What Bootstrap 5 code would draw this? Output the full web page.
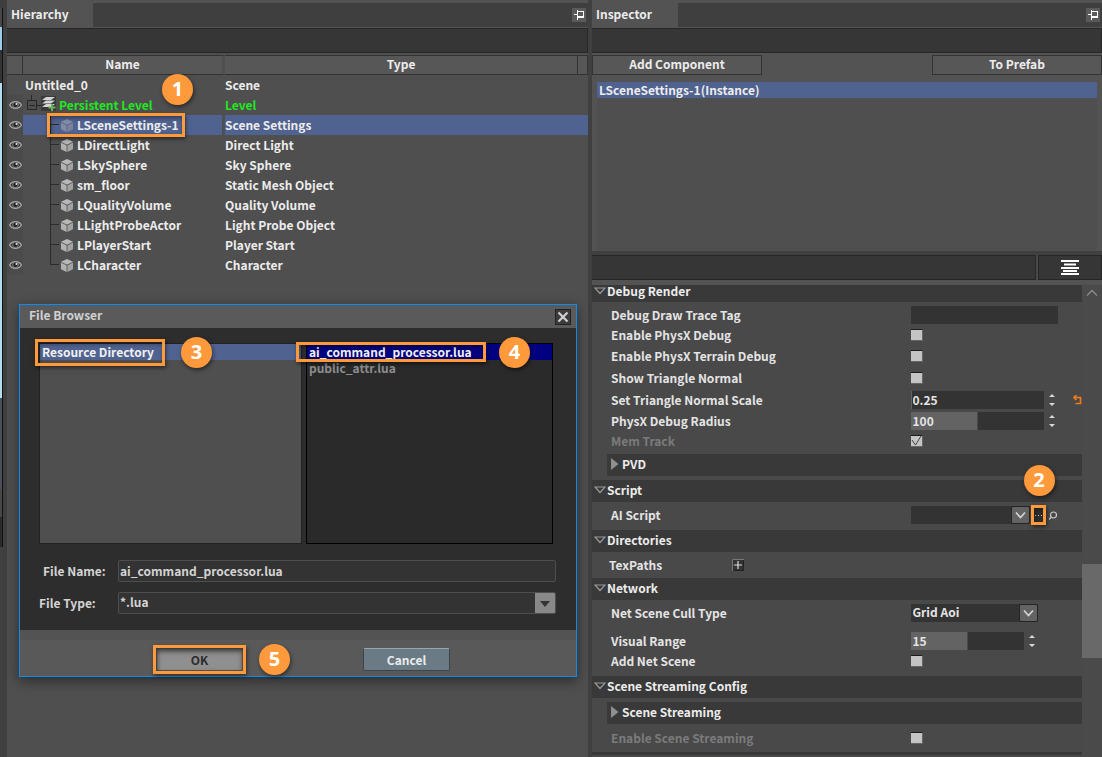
<!DOCTYPE html>
<html lang="en">
<head>
<meta charset="utf-8">
<meta name="viewport" content="width=device-width, initial-scale=1">
<title>Scene Editor</title>
<link href="https://cdn.jsdelivr.net/npm/bootstrap@5.3.0/dist/css/bootstrap.min.css" rel="stylesheet">
<style>
:root { --ed-bg:#4f4f4f; --ed-light:#535353; --ed-bar:#3f3f3f; --ed-dark:#363636; --ed-head:#393939; --ed-line:#262626; --ed-sel:#50628f; --ed-mark:#ff9a3c; }
body { background:#404040; color:#ececec; font-family:"Noto Sans CJK SC","Noto Sans",sans-serif; font-size:12px; line-height:20px; font-weight:600; }
button, input, select { font:inherit; color:inherit; border-radius:0; }
svg { display:block; flex:none; }

/* panels */
.edge-strip { width:7px; border-top:8px solid var(--ed-bar); }
.edge-strip div { width:3px; border-right:1px solid #111; }
.pane-tree { flex:581 1 0; min-width:0; background:var(--ed-bg); }
.pane-props { flex:510 1 0; min-width:0; background:#494949; margin-left:4px; }
.pane-tabs { height:25px; background:var(--ed-bar); border-bottom:1px solid var(--ed-light); }
.pane-top { border-top:3px solid var(--ed-light); }
.pane-tab { width:86px; padding-left:4px; background:var(--ed-light); line-height:22px; }
.pin-btn { width:14px; height:14px; margin:5px 2px 0 0; padding:0; border:0; background:#5a5a5a; }
.tool-strip { height:25px; background:var(--ed-dark); border:1px solid var(--ed-line); border-left:0; }

/* hierarchy */
.tree-table { table-layout:fixed; border-collapse:separate; border-spacing:0; width:100%; margin-top:2px; }
.tree-table th { height:20px; padding:0 0 2px; line-height:16px; font-weight:inherit; text-align:center; background:#575757; border:1px solid #333; border-left:0; }
.tree-table td { height:20px; padding:0; white-space:nowrap; }
.tree-table td.eye-cell { background:#4b4b4b; }
.tree-table tr.picked td + td { background:var(--ed-sel); }
.tree-table td:nth-child(2), .tree-table th:nth-child(2) { border-right:3px solid var(--ed-bg); }
.tree-root { padding-left:2px; }
.tree-item { position:relative; display:flex; align-items:center; height:20px; padding-left:38px; gap:4px; }
.tree-item.level { padding-left:4px; gap:3px; }
.tree-item.child::before { content:""; position:absolute; left:27px; top:0; width:9px; height:10px; border:solid #2b2b2b; border-width:0 0 1px 1px; }
.tree-item.child::after { content:""; position:absolute; left:27px; top:10px; height:10px; border-left:1px solid #2b2b2b; }
.tree-item.last-child::after { display:none; }
.live { color:#22e622; }

/* file dialog */
.file-dialog { position:absolute; left:12px; right:11px; top:301px; border:1px solid #0a8df2; box-shadow:0 4px 12px rgba(0,0,0,.45); background:#2d2d2d; }
.dlg-title { height:23px; padding:0 5px 0 9px; background:#5a5a5a; color:#d0d0d0; }
.dlg-close { width:16px; height:16px; margin-top:4px; padding:0; background:#3c3c3c; border:1px solid #222; }
.dlg-body { padding:15px 20px 16px 19px; color:#d4d4d4; }
.pick-row { gap:4px; margin-right:3px; }
.pick-list { height:201px; line-height:16px; border:1px solid #222; }
.pick-list a { display:block; height:16px; padding-left:2px; color:#f0f0f0; text-decoration:none; }
.list-dirs { flex:263 1 0; background:var(--ed-bg); }
.list-files { flex:247 1 0; background:#2a2a2a; border-color:#000; }
.list-files a.picked { background:#000080; }
.list-files a.other { color:#8d8d8d; }
.list-dirs a { background:var(--ed-sel); }
.dlg-label { width:79px; }
.type-row { margin-top:10px; }
.dlg-field { flex:1; min-width:0; height:22px; padding:0 0 2px 1px; line-height:18px; background:#333; border:1px solid #4e4e4e; border-radius:2px; }
.dlg-select { appearance:none; background:#333 url("data:image/svg+xml,%3Csvg xmlns='http://www.w3.org/2000/svg' width='20' height='20'%3E%3Cpath d='M0 0H20V20H0z' fill='%23888'/%3E%3Cpath d='M5 8H15L10 14z' fill='%23333'/%3E%3C/svg%3E") right center no-repeat; }
.dlg-foot { height:46px; padding:3px 126px 0 136px; background:#595959; border-top:10px solid var(--ed-light); }
.dlg-btn { width:87px; height:23px; padding:0; line-height:20px; border:1px solid #3d454a; border-top-color:#9aa6ad; border-radius:2px; background:#6a7b86; }
.dlg-ok { background:#8f8f8f; color:#2b2b2b; border-color:#555; box-shadow:inset 0 3px 5px rgba(0,0,0,.35); }

/* step callouts drawn over the interface */
.step-box { position:absolute; border:3px solid var(--ed-mark); box-shadow:1px 2px 4px rgba(0,0,0,.5), inset 1px 2px 4px rgba(0,0,0,.4); pointer-events:none; z-index:2; }
.step-dot { position:absolute; width:31px; height:31px; border-radius:50%; background:var(--ed-mark); color:#fff; font:700 20px/30px "Open Sans","Noto Sans",sans-serif; text-align:center; box-shadow:1px 2px 4px rgba(0,0,0,.5); z-index:3; }

/* inspector */
.top-block { background:var(--ed-light); padding-top:2px; }
.wide-btn { width:170px; height:20px; padding:0 0 2px; line-height:16px; background:#575757; border:1px solid #333; }
.obj-list { height:169px; margin:7px 5px 0; background:var(--ed-bg); line-height:16px; }
.obj-list div { height:16px; padding-left:2px; background:var(--ed-sel); }
.filter-row { height:34px; border-top:4px solid #404040; border-bottom:5px solid var(--ed-light); }
.view-btn { width:64px; height:25px; margin-left:2px; border:1px solid var(--ed-line); background:var(--ed-dark); }
.sect { display:flex; align-items:center; gap:1px; width:100%; height:22px; padding:0 0 2px 2px; border:0; background:var(--ed-head); }
.sect-first { height:17px; line-height:14px; padding-bottom:6px; }
.sect-cut { height:3px; padding:0; }
.sub-sect { display:flex; align-items:center; gap:3px; height:22px; margin:0 0 4px 15px; padding:0 0 2px 4px; border:0; background:var(--ed-head); }
.sub-wrap { padding-top:3px; }
.prop-row { display:flex; align-items:center; height:20px; color:#e4e4e4; }
.prop-row.tall { height:22px; }
.prop-row label { width:65%; padding-left:19px; flex:none; }
.prop-row.off { color:#7b7b7b; }
.tex-row { height:26px; }
.tex-name { width:140px; padding-left:17px; }
.group { padding:3px 0 5px; }
.prop-field { height:18px; padding:0 2px 2px; line-height:16px; border:0; background-color:#333; }
.w-text { width:147px; }
.w-num { width:133px; }
.w-num-s { width:113px; }
.fill { background-image:linear-gradient(#636363,#636363); background-repeat:no-repeat; }
.drop { appearance:none; background:#333 url("data:image/svg+xml,%3Csvg xmlns='http://www.w3.org/2000/svg' width='19' height='18'%3E%3Crect x='.5' y='.5' width='18' height='17' rx='1.5' fill='%23636363' stroke='%23252525'/%3E%3Cpath d='M5 6.500L9.500 11.500L14 6.500' fill='none' stroke='%23d8d8d8' stroke-width='1.600'/%3E%3C/svg%3E") right center no-repeat; }
.w-drop { width:127px; }
.w-drop-s { width:119px; }
.tick { appearance:none; width:12px; height:12px; margin:0; background:#c4c4c4 center no-repeat; border:solid #666; border-width:1px 1px 1px 0; border-top-color:#1c1c1c; }
.tick:checked { background-image:url("data:image/svg+xml,%3Csvg xmlns='http://www.w3.org/2000/svg' width='11' height='10'%3E%3Cpath d='M1 4L4.500 9L10 0' fill='none' stroke='%23444'/%3E%3C/svg%3E"); }
.bare-btn { padding:0; border:0; background:none; }
.spin-btn { margin-left:3px; }
.more-btn { width:15px; height:18px; margin-left:1px; padding:0; border:0; background:#2e2e2e; position:relative; }
.scroll-rail { width:20px; background:#4a4a4a; }
.scroll-thumb { height:94px; margin-top:263px; background:#696969; }
</style>
</head>
<body>
<svg width="0" height="0" class="position-absolute" aria-hidden="true">
  <symbol id="eye" viewBox="0 0 13 10"><path d="M.6 5C3 .6 10 .6 12.400 5C10 9.400 3 9.400 .6 5z" fill="#3a3a3a" stroke="#a8a8a8" stroke-width="1.300"/><circle cx="6.500" cy="4.800" r="2.800" fill="#222" stroke="#999" stroke-width=".8"/><circle cx="7.500" cy="4" r="1.100" fill="#ddd"/></symbol>
  <symbol id="cube" viewBox="0 0 12 13"><path d="M6 0L12 2.700L6 5.800L0 2.700z" fill="#b8b8b8"/><path d="M0 3.500L5.600 6.400V13L0 10.200z" fill="#b2b2b2"/><path d="M12 3.500L6.400 6.400V13L12 10.200z" fill="#a2a2a2"/></symbol>
  <symbol id="pin" viewBox="0 0 14 14"><path d="M2 6.500H5M5.500 2V12M5 3.500H11.500M11.500 3V9.500M5 9H12" fill="none" stroke="#fff"/><path d="M5 8H12V10H5z" fill="#fff"/></symbol>
  <symbol id="open" viewBox="0 0 12 8"><path d="M1 1H11L6 6.500z" fill="none" stroke="#9a9a9a" stroke-width="1.200"/></symbol>
  <symbol id="shut" viewBox="0 0 8 12"><path d="M0 0L7.500 6L0 12z" fill="#8f8f8f"/></symbol>
  <symbol id="spin" viewBox="0 0 10 14"><path d="M2 4L5 1L8 4zM2 10L5 13L8 10z" fill="#d8d8d8"/></symbol>
</svg>

<div class="d-flex vh-100 overflow-hidden position-relative">
  <div class="edge-strip flex-shrink-0" aria-hidden="true">
    <div style="height:19px;background:#474747"></div>
    <div style="height:23px;background:#9bcdec"></div>
    <div style="height:33px;background:#333"></div>
    <div style="height:315px;background:#b5ddf1"></div>
    <div style="height:91px;background:#4a505e"></div>
    <div style="height:28px;background:#484848"></div>
    <div style="height:30px;background:#2a2a2a"></div>
  </div>

  <section class="pane-tree pane-top position-relative">
    <div class="pane-tabs d-flex justify-content-between">
      <div class="pane-tab">Hierarchy</div>
      <button class="pin-btn" aria-label="Pin hierarchy"><svg width="14" height="14"><use href="#pin"/></svg></button>
    </div>
    <div class="tool-strip"></div>
    <table class="tree-table">
      <colgroup><col style="width:16px"><col style="width:202px"><col><col style="width:10px"></colgroup>
      <thead><tr><th></th><th>Name</th><th>Type</th><th></th></tr></thead>
      <tbody>
        <tr><td></td><td><div class="tree-root">Untitled_0</div></td><td colspan="2">Scene</td></tr>
        <tr class="live"><td class="eye-cell"><svg class="mx-auto" width="13" height="10"><use href="#eye"/></svg></td>
          <td><div class="tree-item level"><svg width="29" height="20" viewBox="0 0 29 20"><path d="M4.500 0V5M.5 5.500H9.500V14.500H.5zM2 10.500H8M10 10.500H14" fill="none" stroke="#262626"/><path d="M14 1H29V16H14z" fill="#3a3a3a"/><path d="M19 2H28L24 5H15zM19 5.500H28L24 8.500H15zM19 9H28L24 12H15z" fill="#d4d4d4"/><path d="M25 9V16M21.500 12.500H28.500" stroke="#6db35a" stroke-width="2"/></svg>Persistent Level</div></td><td colspan="2">Level</td></tr>
        <tr class="picked"><td class="eye-cell"><svg class="mx-auto" width="13" height="10"><use href="#eye"/></svg></td>
          <td><div class="tree-item child"><svg width="12" height="13" opacity=".5"><use href="#cube"/></svg>LSceneSettings-1
            <span class="step-box" style="left:24px;top:-2px;width:138px;height:24px"></span><span class="step-dot" style="left:139px;top:-41px">1</span></div></td><td colspan="2">Scene Settings</td></tr>
        <tr><td class="eye-cell"><svg class="mx-auto" width="13" height="10"><use href="#eye"/></svg></td><td><div class="tree-item child"><svg width="12" height="13"><use href="#cube"/></svg>LDirectLight</div></td><td colspan="2">Direct Light</td></tr>
        <tr><td class="eye-cell"><svg class="mx-auto" width="13" height="10"><use href="#eye"/></svg></td><td><div class="tree-item child"><svg width="12" height="13"><use href="#cube"/></svg>LSkySphere</div></td><td colspan="2">Sky Sphere</td></tr>
        <tr><td class="eye-cell"><svg class="mx-auto" width="13" height="10"><use href="#eye"/></svg></td><td><div class="tree-item child"><svg width="12" height="13"><use href="#cube"/></svg>sm_floor</div></td><td colspan="2">Static Mesh Object</td></tr>
        <tr><td class="eye-cell"><svg class="mx-auto" width="13" height="10"><use href="#eye"/></svg></td><td><div class="tree-item child"><svg width="12" height="13"><use href="#cube"/></svg>LQualityVolume</div></td><td colspan="2">Quality Volume</td></tr>
        <tr><td class="eye-cell"><svg class="mx-auto" width="13" height="10"><use href="#eye"/></svg></td><td><div class="tree-item child"><svg width="12" height="13"><use href="#cube"/></svg>LLightProbeActor</div></td><td colspan="2">Light Probe Object</td></tr>
        <tr><td class="eye-cell"><svg class="mx-auto" width="13" height="10"><use href="#eye"/></svg></td><td><div class="tree-item child"><svg width="12" height="13"><use href="#cube"/></svg>LPlayerStart</div></td><td colspan="2">Player Start</td></tr>
        <tr><td class="eye-cell"><svg class="mx-auto" width="13" height="10"><use href="#eye"/></svg></td><td><div class="tree-item child last-child"><svg width="12" height="13"><use href="#cube"/></svg>LCharacter</div></td><td colspan="2">Character</td></tr>
      </tbody>
    </table>

    <div class="file-dialog" role="dialog" aria-label="File Browser">
      <div class="dlg-title d-flex justify-content-between">File Browser
        <button class="dlg-close" aria-label="Close"><svg width="14" height="14"><path d="M2.500 2.500L11.500 11.500M11.500 2.500L2.500 11.500" stroke="#d0d0d0" stroke-width="2.200"/></svg></button></div>
      <div class="dlg-body">
        <div class="d-flex pick-row">
          <div class="pick-list list-dirs position-relative"><a href="#">Resource Directory</a>
            <span class="step-box" style="left:-5px;top:-5px;width:130px;height:27px"></span><span class="step-dot" style="left:141px;top:-7px">3</span></div>
          <div class="pick-list list-files position-relative"><a href="#" class="picked">ai_command_processor.lua</a><a href="#" class="other">public_attr.lua</a>
            <span class="step-box" style="left:-11px;top:-2px;width:190px;height:20px"></span><span class="step-dot" style="left:192px;top:-7px">4</span></div>
        </div>
        <div class="d-flex align-items-center mt-3"><label class="dlg-label ps-1" for="fname">File Name:</label><input class="dlg-field" id="fname" type="text" value="ai_command_processor.lua"></div>
        <div class="d-flex align-items-center type-row"><label class="dlg-label" for="ftype">File Type:</label><select class="dlg-field dlg-select" id="ftype"><option>*.lua</option></select></div>
      </div>
      <div class="dlg-foot d-flex align-items-center justify-content-between">
        <div class="position-relative"><button class="dlg-btn dlg-ok d-block">OK</button><span class="step-box" style="left:-3px;top:-3px;width:93px;height:29px"></span><span class="step-dot" style="left:103px;top:-4px">5</span></div>
        <button class="dlg-btn">Cancel</button>
      </div>
    </div>
  </section>

  <section class="pane-props pane-top d-flex flex-column">
    <div class="pane-tabs d-flex justify-content-between flex-shrink-0">
      <div class="pane-tab">Inspector</div>
      <button class="pin-btn" aria-label="Pin inspector"><svg width="14" height="14"><use href="#pin"/></svg></button>
    </div>
    <div class="tool-strip flex-shrink-0"></div>
    <div class="top-block flex-shrink-0">
      <div class="d-flex justify-content-between"><button class="wide-btn">Add Component</button><button class="wide-btn">To Prefab</button></div>
      <div class="obj-list"><div>LSceneSettings-1(Instance)</div></div>
    </div>
    <div class="filter-row d-flex flex-shrink-0">
      <div class="tool-strip flex-grow-1"></div>
      <button class="view-btn d-flex align-items-center justify-content-center" aria-label="View options"><svg width="18" height="15"><path d="M0 1H18M3 4.500H15M0 8H18M2 11H16M0 14H18" stroke="#fff" stroke-width="2"/></svg></button>
    </div>
    <div class="d-flex flex-grow-1">
      <div class="flex-grow-1">
        <button class="sect sect-first"><svg width="12" height="8"><use href="#open"/></svg>Debug Render</button>
        <div class="group pb-0">
          <div class="prop-row"><label for="p1">Debug Draw Trace Tag</label><input id="p1" type="text" class="prop-field w-text"></div>
          <div class="prop-row"><label for="p2">Enable PhysX Debug</label><input id="p2" type="checkbox" class="tick"></div>
          <div class="prop-row tall"><label for="p3">Enable PhysX Terrain Debug</label><input id="p3" type="checkbox" class="tick"></div>
          <div class="prop-row tall"><label for="p4">Show Triangle Normal</label><input id="p4" type="checkbox" class="tick"></div>
          <div class="prop-row tall"><label for="p5">Set Triangle Normal Scale</label><input id="p5" type="text" class="prop-field w-num fill" value="0.25" style="background-size:1px 100%"><button class="bare-btn spin-btn" aria-label="Step"><svg width="10" height="14"><use href="#spin"/></svg></button><button class="bare-btn ms-3" aria-label="Reset"><svg width="9" height="10"><path d="M3.500 0L1 2.500L3.500 5M1 2.500H7.500V8.500H2.500" fill="none" stroke="#f57c1a" stroke-width="1.600"/></svg></button></div>
          <div class="prop-row"><label for="p6">PhysX Debug Radius</label><input id="p6" type="text" class="prop-field w-num fill" value="100" style="background-size:50% 100%"><button class="bare-btn spin-btn" aria-label="Step"><svg width="10" height="14"><use href="#spin"/></svg></button></div>
          <div class="prop-row off"><label for="p7">Mem Track</label><input id="p7" type="checkbox" class="tick" checked></div>
        </div>
        <div class="d-flex flex-column sub-wrap"><button class="sub-sect"><svg width="8" height="12"><use href="#shut"/></svg>PVD</button></div>
        <button class="sect"><svg width="12" height="8"><use href="#open"/></svg>Script</button>
        <div class="group">
          <div class="prop-row"><label for="p8">AI Script</label><select id="p8" class="prop-field drop w-drop-s"><option></option></select>
            <button class="more-btn" aria-label="Browse"><svg width="15" height="18"><path d="M4 9.500H5M7 9.500H8M10 9.500H11" stroke="#ccc"/></svg><span class="step-box" style="left:0;top:-1px;width:15px;height:20px"></span><span class="step-dot" style="left:-7px;top:-41px">2</span></button>
            <button class="bare-btn spin-btn" aria-label="Find"><svg width="8" height="9"><circle cx="4.500" cy="4" r="3" fill="none" stroke="#ccc" stroke-width="1.200"/><path d="M2.500 6L0 8.500" stroke="#ccc" stroke-width="1.300"/></svg></button></div>
        </div>
        <button class="sect"><svg width="12" height="8"><use href="#open"/></svg>Directories</button>
        <div class="prop-row tex-row"><span class="tex-name">TexPaths</span><button class="bare-btn" aria-label="Add path"><svg width="12" height="12"><path d="M.5 .5H11.500V11.500H.5z" fill="#333" stroke="#222"/><path d="M.5 12V.5H12" fill="none" stroke="#777"/><path d="M6 2V10M2 6H10" stroke="#ddd" stroke-width="1.200"/></svg></button></div>
        <button class="sect"><svg width="12" height="8"><use href="#open"/></svg>Network</button>
        <div class="group">
          <div class="prop-row mb-2"><label for="p9">Net Scene Cull Type</label><select id="p9" class="prop-field drop w-drop"><option>Grid Aoi</option></select></div>
          <div class="prop-row"><label for="p10">Visual Range</label><input id="p10" type="text" class="prop-field w-num-s fill" value="15" style="background-size:50% 100%"><button class="bare-btn spin-btn" aria-label="Step"><svg width="10" height="14"><use href="#spin"/></svg></button></div>
          <div class="prop-row"><label for="p11">Add Net Scene</label><input id="p11" type="checkbox" class="tick"></div>
        </div>
        <button class="sect"><svg width="12" height="8"><use href="#open"/></svg>Scene Streaming Config</button>
        <div class="d-flex flex-column pt-1"><button class="sub-sect"><svg width="8" height="12"><use href="#shut"/></svg>Scene Streaming</button></div>
        <div class="prop-row off"><label for="p12">Enable Scene Streaming</label><input id="p12" type="checkbox" class="tick"></div>
        <div class="sect sect-cut mt-1"></div>
      </div>
      <div class="scroll-rail flex-shrink-0"><svg class="mx-auto" width="10" height="16"><path d="M0 10.500L5 5.500L10 10.500" fill="none" stroke="#8c8c8c" stroke-width="1.400"/></svg><div class="scroll-thumb"></div></div>
    </div>
  </section>
</div>
<script src="https://cdn.jsdelivr.net/npm/bootstrap@5.3.0/dist/js/bootstrap.bundle.min.js"></script>
</body>
</html>
